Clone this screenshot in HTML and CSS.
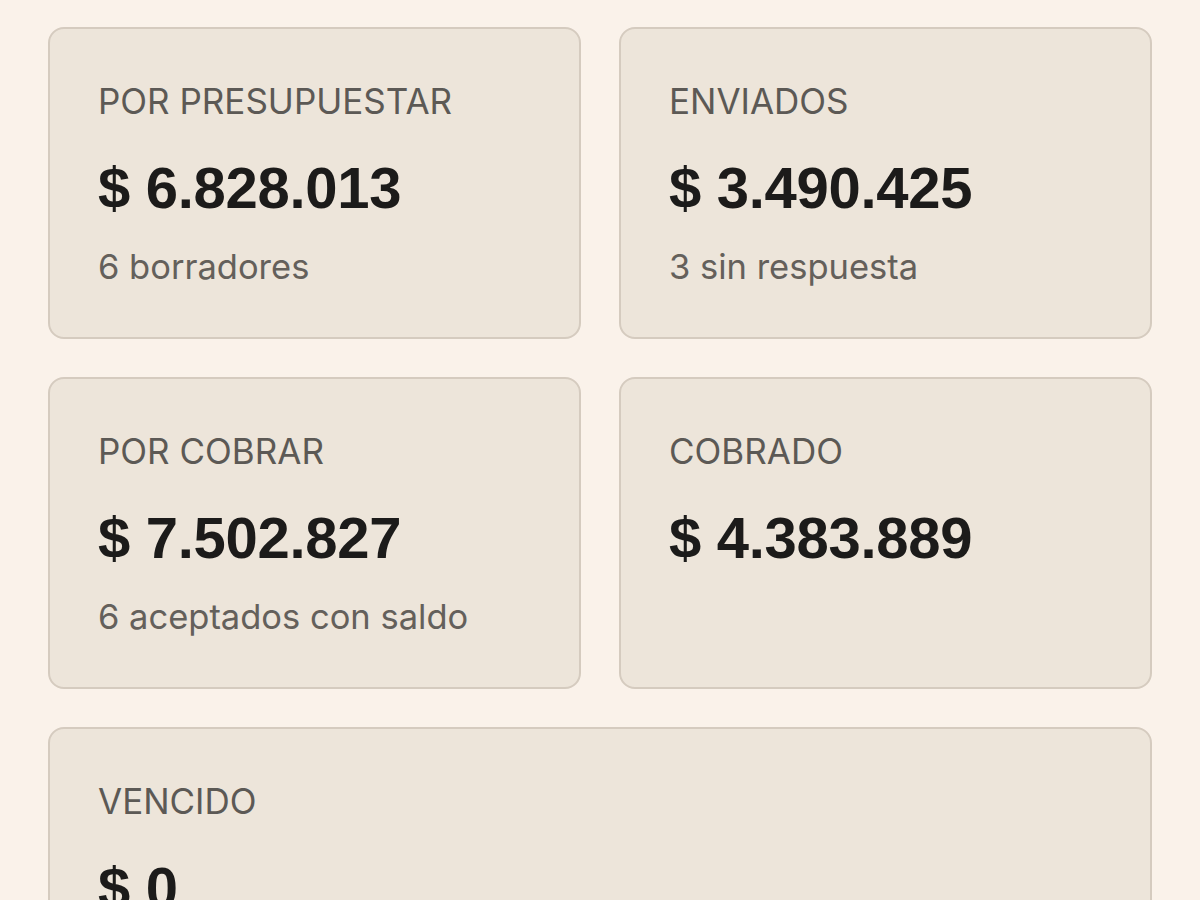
FILE: index.html
```html
<!DOCTYPE html>
<html lang="es">
<head>
<meta charset="utf-8">
<link rel="stylesheet" href="styles.css">
</head>
<body>
<main class="stats">
  <section class="card">
    <div class="label">POR PRESUPUESTAR</div>
    <div class="amount">$ 6.828.013</div>
    <div class="sub">6 borradores</div>
  </section>
  <section class="card">
    <div class="label">ENVIADOS</div>
    <div class="amount">$ 3.490.425</div>
    <div class="sub">3 sin respuesta</div>
  </section>
  <section class="card">
    <div class="label">POR COBRAR</div>
    <div class="amount">$ 7.502.827</div>
    <div class="sub">6 aceptados con saldo</div>
  </section>
  <section class="card">
    <div class="label">COBRADO</div>
    <div class="amount">$ 4.383.889</div>
  </section>
  <section class="card wide">
    <div class="label">VENCIDO</div>
    <div class="amount">$ 0</div>
  </section>
</main>
</body>
</html>
```
FILE: styles.css
```css
html, body {
  margin: 0;
  padding: 0;
  background: #faf2ea;
}
body {
  font-family: Inter, "Liberation Sans", sans-serif;
  color: #1c1b1a;
}
.stats {
  display: grid;
  grid-template-columns: 1fr 1fr;
  gap: 38px;
  padding: 27px 48px 48px;
}
.card {
  background: #ede5da;
  border: 2px solid #d5cbbf;
  border-radius: 16px;
  padding: 50px 48px 48px;
  display: flex;
  flex-direction: column;
}
.wide {
  grid-column: 1 / -1;
}
.label {
  font-size: 35px;
  line-height: 44px;
  color: #5c5955;
}
.amount {
  font-family: "Liberation Sans", Arial, sans-serif;
  font-size: 58px;
  font-weight: 700;
  line-height: 70px;
  margin-top: 30px;
  letter-spacing: -0.3px;
  color: #1c1b1a;
}
.sub {
  font-size: 34.5px;
  line-height: 44px;
  margin-top: 22px;
  color: #64605b;
}
```
